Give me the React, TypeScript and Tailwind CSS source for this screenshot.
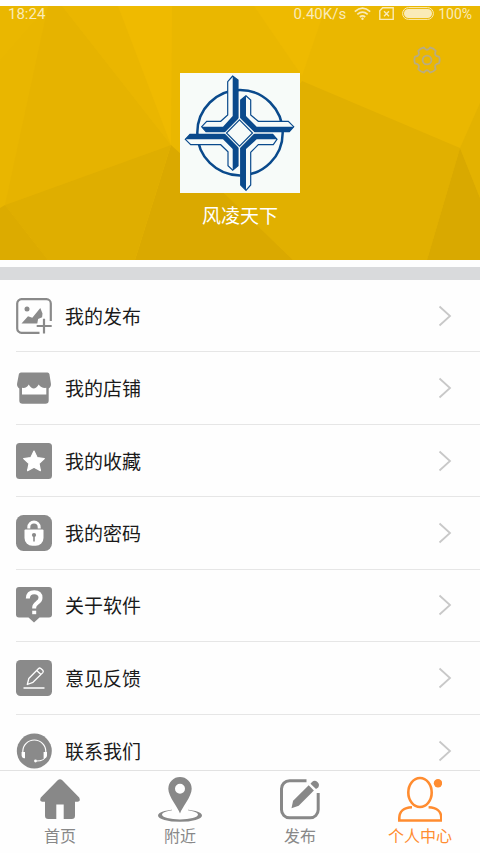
import type { ReactNode } from 'react';

type Item = {
  label: string;
  href: string;
  icon: ReactNode;
};

const menuItems: Item[] = [
  {
    label: '我的发布',
    href: '#posts',
    icon: (
      <>
        <path
          d="M23.5 34.8H5.5a4.3 4.3 0 0 1-4.3-4.3v-25a4.3 4.3 0 0 1 4.3-4.3h25a4.3 4.3 0 0 1 4.3 4.3V23M28 20.7v14.8M20.7 28h15"
          fill="none"
          stroke="currentColor"
          strokeWidth="2.2"
        />
        <circle cx="11" cy="11" r="2.5" />
        <path d="M5.5 25.6 12 18.2l4.3 1.5 8-9.6 2.2 5.4-.4 3.7-4 1.8-.8 4.6z" />
      </>
    ),
  },
  {
    label: '我的店铺',
    href: '#shop',
    icon: (
      <>
        <path d="M5 2.5h26.500q1.500 0 1.900 1.500l1.500 9.500a5 5 0 0 1-2.200 5V30.500q0 3.300-3.300 3.300H6.600q-3.300 0-3.300-3.300V18.500a5 5 0 0 1-2.200-5L2.900 4q.4-1.500 2.100-1.500z" />
        <path d="M6 17.800q4.700.7 6.700-3.300 5 8 10 0 2.600 4 7.600 3.300v6.700H6z" fill="white" />
      </>
    ),
  },
  {
    label: '我的收藏',
    href: '#favorites',
    icon: (
      <>
        <rect width="36" height="36" rx="3.5" />
        <path
          d="m18 8 3.100 6.600 7.200.9-5.300 5 1.400 7.100L18 24.200l-6.400 3.400 1.400-7.100-5.300-5 7.200-.9z"
          fill="white"
          stroke="white"
          strokeWidth="1.2"
          strokeLinejoin="round"
        />
      </>
    ),
  },
  {
    label: '我的密码',
    href: '#password',
    icon: (
      <>
        <rect width="36" height="36" rx="7.5" />
        <path d="M12.800 13.500v-1.200a5.200 5.200 0 0 1 10.400 0v1.200" fill="none" stroke="white" strokeWidth="3" />
        <path d="M9.500 14.500h17q1 0 1 1V23a7.800 7.800 0 0 1-7.800 7.800h-3.400A7.800 7.800 0 0 1 8.500 23v-7.500q0-1 1-1z" fill="white" />
        <circle cx="18" cy="20" r="2.1" />
        <path d="M17.200 20h1.600v6.500h-1.600z" />
      </>
    ),
  },
  {
    label: '关于软件',
    href: '#about',
    icon: (
      <>
        <path d="M3 0h30q3 0 3 3v24.500q0 3-3 3h-9.500L18 35.500l-5.500-5H3q-3 0-3-3V3q0-3 3-3z" />
        <path
          d="M11.800 11.500q.2-6.300 6.500-6.300 6.200.1 6.200 5.600 0 2.900-3.300 5-3 2.100-3 4.600v1.200"
          fill="none"
          stroke="white"
          strokeWidth="4"
        />
        <path d="M16.200 23.700h4v3.500h-4z" fill="white" />
      </>
    ),
  },
  {
    label: '意见反馈',
    href: '#feedback',
    icon: (
      <>
        <rect width="36" height="36" rx="4.5" />
        <path
          d="m11.300 24.500 1.500-6 9.800-10q1-1 2.200 0l2 1.800q1 1.100 0 2.300L17 22.300zM20.700 10.500l4 3.800"
          fill="none"
          stroke="white"
          strokeWidth="1.3"
          strokeLinejoin="round"
        />
        <path d="M7.500 28h21" stroke="white" strokeWidth="1.5" />
      </>
    ),
  },
  {
    label: '联系我们',
    href: '#contact',
    icon: (
      <>
        <circle cx="18.3" cy="18" r="17.5" />
        <path
          d="M6.800 20v-1.500a11.500 11.500 0 0 1 23 0V20M29.800 23q-1 5-9.500 5"
          fill="none"
          stroke="white"
          strokeWidth="1.2"
        />
        <path d="M5.600 19h3.400v6.200H7.700q-2.100-.7-2.100-2.700zM31 19h-3.400v6.200h1.300q2.100-.7 2.100-2.700z" fill="white" />
        <circle cx="19.5" cy="28" r="1.4" fill="white" />
      </>
    ),
  },
];

const tabs: Item[] = [
  {
    label: '首页',
    href: '#home',
    icon: (
      <path d="M19.700 4.300q2.300-2 4.600 0L41.200 21.500q1.800 3.800-1.500 4.200H37v14q0 3.300-3.300 3.300h-8V28.500h-7.400V43h-8Q7 43 7 39.700v-14H4.300q-3.300-.4-1.500-4.200z" />
    ),
  },
  {
    label: '附近',
    href: '#nearby',
    icon: (
      <>
        <path
          fillRule="evenodd"
          d="M0 39.500a22 6.300 0 1 0 44 0 22 6.300 0 1 0-44 0zM4 38.600a18 4.900 0 1 0 36 0 18 4.900 0 1 0-36 0z"
        />
        <path d="M14 30h16v5l-4 4h-8l-4-4z" fill="white" />
        <path
          fillRule="evenodd"
          d="M22 37.500C20 31.500 10.300 20.500 10.300 12.700a11.700 11.700 0 0 1 23.400 0C33.700 20.500 24 31.500 22 37.500zM17 12.700a5 5 0 1 0 10 0 5 5 0 1 0-10 0z"
        />
      </>
    ),
  },
  {
    label: '发布',
    href: '#publish',
    icon: (
      <>
        <path
          d="M28.500 4.800H11.500a8 8 0 0 0-8 8v21a8 8 0 0 0 8 8h20.700a8 8 0 0 0 8-8V17"
          fill="none"
          stroke="currentColor"
          strokeWidth="3"
        />
        <path d="m13.500 32.300 1.600-7.600L30.700 9.300l5.200 5.200-15.200 15.300z" />
        <path d="m32.500 7.700 1.500-1.800a4.200 4.200 0 0 1 6.200 5.500L38 13z" />
      </>
    ),
  },
  {
    label: '个人中心',
    href: '#me',
    icon: (
      <>
        <path
          d="M14 31.300C5.500 31.500 1.300 36 1.300 42v2.500h42V42c0-6-4.200-10.500-12.700-10.700"
          fill="none"
          stroke="currentColor"
          strokeWidth="2.6"
        />
        <ellipse cx="22" cy="16.5" rx="11.7" ry="14.5" fill="none" stroke="currentColor" strokeWidth="2.6" />
        <circle cx="40" cy="7.3" r="4.2" />
      </>
    ),
  },
];

function HeaderBackground() {
  return (
    <svg
      viewBox="0 0 480 254"
      preserveAspectRatio="none"
      className="absolute inset-0 h-full w-full"
      aria-hidden="true"
    >
      <rect width="480" height="254" fill="#eab700" />
      <path d="M0 55 48 0 15 200 0 202z" fill="#e9b600" />
      <path d="M48 0h14l109 139L5 199z" fill="#e6b300" />
      <path d="M62 0h56l53 139z" fill="#eab600" />
      <path d="M118 0h54l-1 139z" fill="#efba00" />
      <path d="M254 0h72l-24 70z" fill="#eeba00" />
      <path d="m302 75 158 67-33 112H293L225 188z" fill="#e1b000" />
      <path d="m171 139 54 49 68 66H135z" fill="#daa900" />
      <path d="m5 199 166-60-36 115H48z" fill="#dfae00" />
      <path d="m0 202 5-3 43 55H0z" fill="#dcab00" />
      <path d="m460 142 20-45v95z" fill="#e3b200" />
      <path d="m460 142 20 50v62h-53z" fill="#d9a900" />
    </svg>
  );
}

function StatusBar() {
  return (
    <div className="relative flex h-4 items-center justify-between px-2 font-[Roboto,sans-serif] text-[15px] text-[#faebb8]">
      <span>18:24</span>
      <div className="flex items-center gap-2">
        <span>0.40K/s</span>
        <svg viewBox="0 0 17 14" className="h-[14px] w-[17px]" fill="none" stroke="currentColor" strokeWidth="1.7">
          <path d="M.8 4.600q7.700-6.800 15.400 0M3.300 7.400q5.200-4.400 10.400 0M5.800 10q2.700-2.200 5.400 0" />
          <circle cx="8.5" cy="11.800" r="1.2" fill="currentColor" stroke="none" />
        </svg>
        <svg viewBox="0 0 15 14" className="h-[14px] w-[15px]" fill="none" stroke="currentColor" strokeWidth="1.4">
          <path d="M3.700.8h10.500v11.600H.8V3.700zM5 4.200l5 5M10 4.200l-5 5" />
        </svg>
        <div className="flex items-center gap-1">
          <svg viewBox="0 0 32 14" className="h-[14px] w-8">
            <rect x=".6" y=".6" width="30.8" height="11.8" rx="5.9" fill="none" stroke="currentColor" />
            <rect x="2" y="2" width="28" height="9" rx="4.5" fill="currentColor" />
          </svg>
          <span className="text-sm">100%</span>
        </div>
      </div>
    </div>
  );
}

function Avatar() {
  return (
    <svg viewBox="0 0 120 120" className="size-[120px] bg-[#f7fbf9]" role="img" aria-label="风凌天下">
      <circle cx="60" cy="59.7" r="42.7" fill="none" stroke="#0a4a8c" strokeWidth="2.5" />
      <g fill="#f7fbf9" stroke="#0a4a8c" strokeWidth="1.2">
        <path d="m52.700 3-5 5.700V42l-7 6.300h-14l-5 5.400 4.300 5h20.700L58 45.700V7z" />
        <path d="M66 22.700 60.700 27v18.300l14 13.400h34.600l4.400-5-5.400-5.400h-30L70.700 42V27z" />
        <path d="m5.300 66.300 4.700-5h36.700L58 73.700v19l-5.300 4.600-4.700-4.600v-14l-7.300-7h-30z" />
        <path d="M66 117.300 60.700 112V73.700l12.600-12.400h19.400l4.300 5-3.700 5.400h-15l-7.600 7.600V112z" />
      </g>
      <g fill="#0a4a8c">
        <path d="M52.700 3 58 7v38.700l-11.300 13H26l-4.300-5H43L52.700 43z" />
        <path d="M66 22.700 60.700 27v18.300l14 13.400h34.600l4.400-5h-37L66 43z" />
        <path d="m5.300 66.300 4.700-5h36.700L58 73.700v19l-5.300 4.600V76L43 66.300z" />
        <path d="M66 117.300 60.700 112V73.700l12.600-12.400h19.400l4.300 5H76.700L66 76z" />
      </g>
      <path d="m59.500 44.500 15.300 15.500-15.300 15.500L44.200 60z" fill="#f7fbf9" />
      <path d="m59.500 46.800 13 13.200-13 13.200-13-13.200z" fill="none" stroke="#0a4a8c" strokeWidth="1.2" />
    </svg>
  );
}

function GearIcon() {
  return (
    <svg
      viewBox="0 0 28 28"
      className="size-7"
      fill="none"
      stroke="currentColor"
      strokeWidth="1.8"
      strokeLinejoin="round"
      aria-hidden="true"
    >
      <path d="M26 10.600q1.300 3.400 0 6.800Q20.600 17.800 22.700 23.200q-2.200 2.700-5.700 3.300Q14 22 11 26.500q-3.500-.6-5.700-3.300Q7.400 17.800 2 17.400q-1.300-3.400 0-6.800Q7.400 10.200 5.300 4.800 7.500 2.100 11 1.500q3 4.500 6 0 3.500.6 5.700 3.300-2.100 5.400 3.300 5.800z" />
      <circle cx="14" cy="14" r="4.4" />
    </svg>
  );
}

export default function App() {
  return (
    <div className="flex h-screen flex-col bg-[#fefefe] font-['Noto_Sans_CJK_SC',sans-serif] text-[#1a1a1a]">
      <main className="min-h-0 flex-1 overflow-y-auto pt-[6px] [scrollbar-width:none]">
        <header className="relative flex h-[254px] flex-col text-white">
          <HeaderBackground />
          <StatusBar />
          <button type="button" aria-label="设置" className="relative mt-6 mr-[39px] self-end text-[#b9ac80]">
            <GearIcon />
          </button>
          <div className="relative -mt-px flex flex-col items-center gap-2">
            <Avatar />
            <h1 className="text-[19px] leading-7">风凌天下</h1>
          </div>
        </header>

        <div className="mt-[7px] h-[13px] bg-[#d9dadc]" />

        <ul className="grid h-[507px] auto-rows-fr pl-4">
          {menuItems.map((item) => (
            <li key={item.href} className="border-b border-[#e6e6e6] last:border-b-0">
              <a href={item.href} className="flex h-full items-center pr-7">
                <svg viewBox="0 0 36 36" className="size-9 text-[#8a8a8a]" fill="currentColor" aria-hidden="true">
                  {item.icon}
                </svg>
                <span className="ml-[13px] flex-1 text-[19px] leading-7">{item.label}</span>
                <svg
                  viewBox="0 0 14 22"
                  className="h-[22px] w-[14px] text-[#c8c8c8]"
                  fill="none"
                  stroke="currentColor"
                  strokeWidth="1.8"
                  aria-hidden="true"
                >
                  <path d="m1.500 1.500 10.500 9.500-10.500 9.500" />
                </svg>
              </a>
            </li>
          ))}
        </ul>
      </main>

      <nav className="grid h-[83px] grid-cols-4 border-t border-[#e2e2e2] bg-[#fefefe]">
        {tabs.map((tab) => (
          <a
            key={tab.href}
            href={tab.href}
            aria-current={tab.href === '#me' ? 'page' : undefined}
            className="flex flex-col items-center pt-[5px] text-[#888888] aria-[current=page]:text-[#ff8c30]"
          >
            <svg viewBox="0 0 44 46" className="h-[46px] w-11" fill="currentColor" aria-hidden="true">
              {tab.icon}
            </svg>
            <span className="text-base leading-[26px]">{tab.label}</span>
          </a>
        ))}
      </nav>
    </div>
  );
}
